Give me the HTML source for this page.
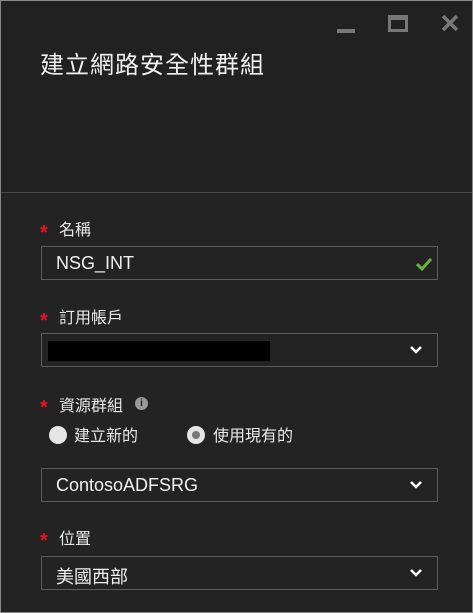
<!DOCTYPE html><html><head><meta charset="utf-8"><style>
*{margin:0;padding:0;box-sizing:border-box}
body{width:473px;height:613px;background:#888;font-family:"Liberation Sans","Noto Sans CJK TC",sans-serif;position:relative;overflow:hidden}
.p{position:absolute;left:1px;top:1px;width:471px;height:611px;background:#232323}
.top{position:absolute;left:0;top:0;width:471px;height:192px;background:#212121;border-bottom:1px solid #4a4a4a}
.t{position:absolute;left:39px;top:44px;color:#f0f0f0;font-size:24px;letter-spacing:1px}
.a{position:absolute;color:#e8e8e8;font-size:16px}
.s{position:absolute;color:#e81123;font-size:20px;font-weight:bold}
.box{position:absolute;left:40px;width:397px;height:34px;border:1px solid #5d5d5d;background:#232323;color:#f0f0f0;font-size:18px;padding:6px 0 0 14px}
.chev{position:absolute;right:14px;top:11px}
.r{position:absolute;width:18px;height:18px;border-radius:50%;background:#e6e6e6}
</style></head><body><div class="p">
<div class="top">
<div style="position:absolute;left:336px;top:28px;width:18px;height:4px;background:#777"></div>
<div style="position:absolute;left:387px;top:14px;width:20px;height:17px;border:3px solid #777;border-top-width:5px"></div>
<svg style="position:absolute;left:440px;top:13px" width="18" height="18"><path d="M2 2L16 16M16 2L2 16" stroke="#777" stroke-width="3.5"/></svg>
<div class="t">建立網路安全性群組</div>
</div>
<div class="s" style="left:39px;top:221px">*</div><div class="a" style="left:58px;top:215px">名稱</div>
<div class="box" style="top:245px">NSG_INT<svg class="chev" style="top:9px;right:4px" width="18" height="16"><path d="M2 8L7 13L16 3" stroke="#6cb33e" stroke-width="3" fill="none"/></svg></div>
<div class="s" style="left:39px;top:309px">*</div><div class="a" style="left:58px;top:303px">訂用帳戶</div>
<div class="box" style="top:332px"><div style="position:absolute;left:6px;top:7px;width:222px;height:20px;background:#000"></div><svg class="chev" width="14" height="10"><path d="M2 2L7 7L12 2" stroke="#fff" stroke-width="2.5" fill="none"/></svg></div>
<div class="s" style="left:39px;top:396px">*</div><div class="a" style="left:58px;top:391px">資源群組</div>
<div style="position:absolute;left:134px;top:396px;width:13px;height:13px;border-radius:50%;background:#999;color:#232323;font-size:10px;font-weight:bold;text-align:center;line-height:13px">i</div>
<div class="r" style="left:48px;top:425px"></div><div class="a" style="left:73px;top:421px">建立新的</div>
<div class="r" style="left:186px;top:425px"><div style="position:absolute;left:5px;top:5px;width:8px;height:8px;border-radius:50%;background:#777"></div></div><div class="a" style="left:212px;top:421px">使用現有的</div>
<div class="box" style="top:467px">ContosoADFSRG<svg class="chev" width="14" height="10"><path d="M2 2L7 7L12 2" stroke="#fff" stroke-width="2.5" fill="none"/></svg></div>
<div class="s" style="left:39px;top:529px">*</div><div class="a" style="left:58px;top:524px">位置</div>
<div class="box" style="top:555px">美國西部<svg class="chev" width="14" height="10"><path d="M2 2L7 7L12 2" stroke="#fff" stroke-width="2.5" fill="none"/></svg></div>
</div></body></html>
